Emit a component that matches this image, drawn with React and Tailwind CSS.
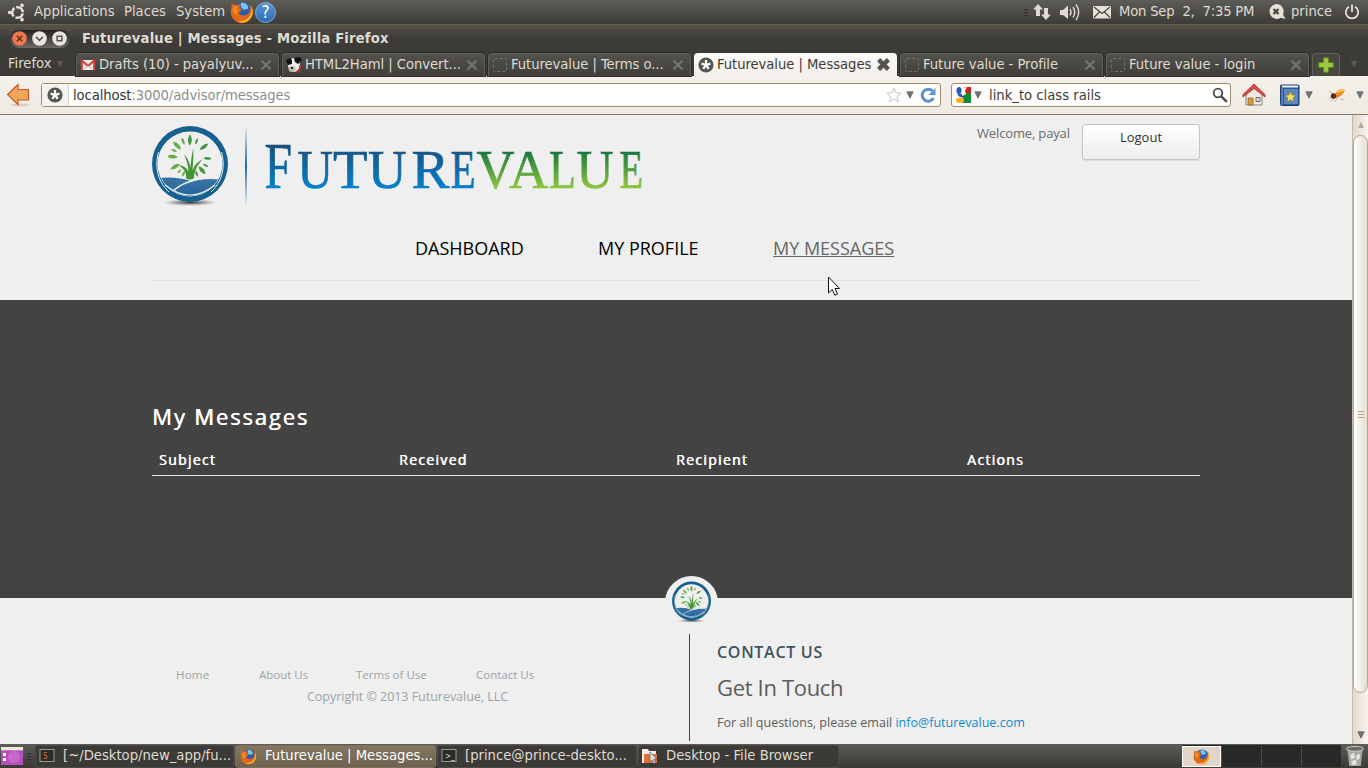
import React from "react";

const UI = "font-['DejaVu_Sans_Condensed','DejaVu_Sans',sans-serif] [font-stretch:condensed]";

function Foxy({ className }) {
  return (
    <svg viewBox="0 0 24 24" className={className}>
      <circle cx="12.5" cy="11" r="9" fill="#2a5fae" />
      <path d="M11 3c5-1 8 3 7 6-2-1-3 2-5 0-2-1-3-3-2-6z" fill="#7cc4ee" />
      <path d="M2 3c1 2 3 2 5 2 2-1 3 0 4 0-2 2-1 4 1 4 0 2-3 2-3 4 1 3 6 3 9 1 3-3 3-7 1-10 4 3 5 8 3 12-2 5-6 7-10 7-7 0-12-6-11-12 0-3 1-6 1-8z" fill="#e0661a" />
      <path d="M21 6c3 5 2 10-1 13-3 4-9 5-13 2 5 1 10-1 12-4 2-3 3-7 2-11z" fill="#f9b52a" />
      <path d="M3 7c2-2 4-1 5 0-2 2-1 3 1 4-2 1-3 3-2 5-3-2-5-5-4-9z" fill="#f08a24" />
    </svg>
  );
}

const leaves = [
  [0, 1], [22, 0.6], [53, 0.95], [93, 0.75], [117, 0.55], [137, 0.95], [158, 0.6],
  [-23, 0.7], [-47, 1], [-66, 0.6], [-87, 0.95], [-121, 1], [-142, 0.5], [-158, 0.6],
];

function Emblem({ className }) {
  return (
    <svg viewBox="0 0 80 84" className={className}>
      <defs>
        <radialGradient id="shade">
          <stop offset="0" stopColor="#222" stopOpacity=".9" />
          <stop offset="1" stopColor="#555" stopOpacity="0" />
        </radialGradient>
        <linearGradient id="hill" x2="0" y2="1">
          <stop offset="0" stopColor="#3c77a8" />
          <stop offset="1" stopColor="#1f5f96" />
        </linearGradient>
        <clipPath id="disc"><circle cx="40" cy="41" r="32" /></clipPath>
      </defs>
      <ellipse cx="40" cy="79.500" rx="27" ry="3.400" fill="url(#shade)" />
      <circle cx="40" cy="41" r="38" fill="#15608f" />
      <circle cx="40" cy="41" r="32.500" fill="#efefef" />
      <path d="M8.500 29C4 46 9 60 19 69M71.500 29C76 46 71 60 61 69" fill="none" stroke="#e8f0f4" strokeWidth="1" />
      <g clipPath="url(#disc)">
        <path d="M2 56Q23 52 41 58L23 70Q10 70 2 56z" fill="#35709f" />
        <path d="M23 69Q43 52 78 56Q68 76 42 76Q29 76 23 71z" fill="url(#hill)" />
        <path d="M21 70Q39 52 72 56" fill="none" stroke="#efefef" strokeWidth="1.300" />
      </g>
      <path d="M15 62Q40 82 65 62" fill="none" stroke="#e8f1f5" strokeWidth="1.200" />
      {leaves.map(([a, s]) => (
        <path key={a} d="M0-5.500C-2.800-2-2.500 2-.4 5.500C2.500 2 2.500-2 0-5.500z" fill={a < 0 ? "#62ad43" : "#429840"} transform={`rotate(${a} 40 34.500) translate(40 17) scale(${s})`} />
      ))}
      <path d="M36 55C37 48 33 46 29 42C34 43 37 45 38.500 49C38.500 42 36 36 34 31C38 36 40 40 40.500 45C41 37 42 31 43.300 25C43.500 34 43 41 42.500 48C44 43 47 39 53 36C47 42 44 48 44 55Q40 58 36 55z" fill="#429533" />
    </svg>
  );
}

function Star({ className }) {
  return (
    <svg viewBox="0 0 16 16" className={className}>
      <circle cx="8" cy="8" r="7.600" fill="#555753" />
      <path d="M8 3V8M3.600 6.600L8 8L12.400 6.600M5.300 11.800L8 8L10.700 11.800" stroke="#fff" strokeWidth="2.200" fill="none" />
    </svg>
  );
}

const Down = ({ className }) => (
  <svg viewBox="0 0 8 8" className={`h-2 w-2 shrink-0 ${className}`}><path d="M.8.8H7.200L4 7.200z" fill="currentColor" stroke="#4a4844" strokeWidth=".6" /></svg>
);

function Fav({ kind }) {
  if (kind === "gmail")
    return <svg viewBox="0 0 16 16" className="h-4 w-4"><path d="M1 3H15V13H1z" fill="#f2eee8" /><path d="M1.800 13V3.500L8 9L14.200 3.500V13" fill="none" stroke="#d33c30" strokeWidth="2" /><path d="M3.500 12L8 9L12.500 12" fill="none" stroke="#c9c4bb" /></svg>;
  if (kind === "cow")
    return <svg viewBox="0 0 16 16" className="h-4 w-4"><ellipse cx="8" cy="8" rx="6" ry="7" fill="#eee" /><path d="M0 3L4 1L6 3L6 7L2 8zM8 1L14 0L16 3L12 7L9 5z" fill="#111" /><ellipse cx="6" cy="12" rx="3.500" ry="3" fill="#bbb" /><path d="M5 10H7V12H5z" fill="#222" /><path d="M14 8Q15 13 10 15" stroke="#c33" strokeWidth="1.800" fill="none" /></svg>;
  if (kind === "star") return <Star className="h-4 w-4" />;
  return <span className="ml-px h-[14px] w-[14px] rounded-[2px] border border-dashed border-[#73716b]" />;
}

const tabs = [
  ["gmail", "Drafts (10) - payalyuv..."],
  ["cow", "HTML2Haml | Convert..."],
  ["blank", "Futurevalue | Terms o..."],
  ["star", "Futurevalue | Messages"],
  ["blank", "Future value - Profile"],
  ["blank", "Future value - login"],
];

function Tab({ kind, label }) {
  const on = kind === "star";
  return (
    <div className={`flex h-[23px] w-[203px] shrink-0 items-center rounded-t-[4px] ${on ? "bg-linear-to-b from-[#fbfaf8] to-[#f3efe9] pl-1 text-[#3c3b37]" : "border border-b-0 border-[#62605a] bg-linear-to-b from-[#53514c] to-[#403f3a] pl-[3px] text-[#dfdbd2] shadow-[0_0_0_1px_#2c2b28]"}`}>
      <span className="flex w-[19px] shrink-0">
        <Fav kind={kind} />
      </span>
      <span className={`${on ? "w-[160px]" : "w-[161px]"} pb-0.5 text-[14.67px] leading-[20px] tracking-[-0.05px] whitespace-nowrap`}>{label}</span>
      <svg viewBox="0 0 12 12" className={on ? "h-[13px] w-[13px]" : "h-[12px] w-[12px]"}>
        <path d="M1.500 1.500L10.500 10.500M10.500 1.500L1.500 10.500" stroke={on ? "#55534f" : "#75736d"} strokeWidth={on ? 4 : 2.400} />
      </svg>
    </div>
  );
}

function Panel() {
  return (
    <div className="flex h-[25px] items-center border-b border-[#6b6047] bg-linear-to-b from-[#5d5c57] to-[#3d3c38] pl-[7px] text-[14.67px] leading-none whitespace-nowrap text-[#dfdbd2]">
      <svg viewBox="0 0 20 20" className="h-[19px] w-[19px] shrink-0">
        <circle cx="11" cy="10" r="5.600" fill="none" stroke="#e8e4da" strokeWidth="2.600" strokeDasharray="9.700 2" strokeDashoffset="-1" />
        <g fill="#e8e4da"><circle cx="2.800" cy="10" r="1.900" /><circle cx="15.800" cy="2.500" r="1.900" /><circle cx="15.800" cy="17.500" r="1.900" /></g>
      </svg>
      <span className="ml-2 w-[90px] pb-0.5">Applications</span>
      <span className="w-[52px] pb-0.5">Places</span>
      <span className="w-[54px] pb-0.5">System</span>
      <Foxy className="h-6 w-6 shrink-0" />
      <span className="ml-[1px] flex h-[21px] w-[21px] items-center justify-center rounded-full border border-[#7eaee0] bg-linear-to-b from-[#5b94d0] to-[#306cb4] text-[17px] text-white">?</span>
      <svg viewBox="0 0 90 24" className="ml-auto h-6 w-[90px]">
        <path d="M1 9.500H5M1 12.500H5M1 15.500H5" stroke="#2f2e2b" />
        <path d="M15 4L20 9.500H17V16H13V9.500H10zM23 20L18 14.500H21V8H25V14.500H28z" fill="#dfdbd2" />
        <path d="M37 10H40L45 5.500V19L40 15H37z" fill="#dfdbd2" />
        <path d="M47 9Q49 12.300 47 15.500M50 7Q53.500 12.300 50 17.500M53 4.500Q58.500 12.300 53 20" stroke="#dfdbd2" strokeWidth="1.400" fill="none" />
        <rect x="70" y="6" width="18" height="12.500" rx="1" fill="#e6e2d8" />
        <path d="M71 7L79 13.500L87 7M71 17.500L76.500 12M87 17.500L81.500 12" stroke="#45443f" strokeWidth="1.200" fill="none" />
      </svg>
      <span className="ml-[6px] w-[149px] pb-0.5 tracking-[-0.2px] whitespace-pre">Mon Sep  2,  7:35 PM</span>
      <svg viewBox="0 0 18 18" className="h-[18px] w-[18px] shrink-0">
        <path d="M8 1A7.500 7.500 0 1 0 13 14.800L17.500 16L15 11.500A7.500 7.500 0 0 0 8 1z" fill="#e6e2d8" />
        <path d="M5.500 6L10.500 11M10.500 6L5.500 11" stroke="#45443f" strokeWidth="2.200" />
      </svg>
      <span className="ml-[5px] w-[53px] pb-0.5">prince</span>
      <svg viewBox="0 0 16 16" className="mr-2 h-4 w-4 shrink-0">
        <path d="M5 2.800A6.200 6.200 0 1 0 11 2.800M8 .5V8" fill="none" stroke="#e6e2d8" strokeWidth="1.800" />
      </svg>
    </div>
  );
}

function TitleBar() {
  return (
    <div className="flex h-[27px] items-center bg-linear-to-b from-[#55534e] to-[#3c3b37] to-50% pl-[10px]">
      <div className="flex h-[18px] w-[60px] items-center gap-1 rounded-full bg-linear-to-b from-[#252422] to-[#6a6964] pl-[2px]">
        <svg viewBox="0 0 14 14" className="h-[15px] w-[15px]"><circle cx="7" cy="7" r="6.800" fill="#ee7950" /><path d="M4.500 4.500L9.500 9.500M9.500 4.500L4.500 9.500" stroke="#5b2c1c" strokeWidth="1.400" /></svg>
        <svg viewBox="0 0 14 14" className="ml-px h-[15px] w-[15px]"><circle cx="7" cy="7" r="6.800" fill="#e9e6e1" /><path d="M3.800 5.500L7 8.700L10.200 5.500" stroke="#55534e" strokeWidth="1.400" fill="none" /></svg>
        <svg viewBox="0 0 14 14" className="ml-px h-[15px] w-[15px]"><circle cx="7" cy="7" r="6.800" fill="#e9e6e1" /><path d="M4.800 4.800H9.200V9.200H4.800z" stroke="#55534e" strokeWidth="1.400" fill="none" /></svg>
      </div>
      <span className="ml-3 text-[14.67px] leading-none font-bold tracking-[0.17px] text-[#dfdbd2]">Futurevalue | Messages - Mozilla Firefox</span>
    </div>
  );
}

function Toolbar() {
  return (
    <div className="flex h-[39px] items-center border-b border-[#8c7c5e] bg-linear-to-b from-[#f4f0ea] to-[#efebe4] pl-[6px] text-[14.67px] text-[#3c3b37]">
      <svg viewBox="0 0 24 24" className="h-6 w-6"><ellipse cx="14" cy="22" rx="9" ry="1.500" fill="#d5cec4" /><path d="M1.500 11.500L12 1.500V6.500H22.500V17H12V21.500z" fill="#f3a55c" stroke="#cc5a24" strokeWidth="1.200" /></svg>
      <div className="ml-[11px] flex h-6 w-[900px] shrink-0 items-center rounded-[3px] border border-[#9c8c6c] bg-white">
        <span className="flex h-full w-[27px] items-center justify-center border-r border-[#d8d4cc] bg-[#f4f2ef]"><Star className="h-4 w-4" /></span>
        <span className="ml-1 leading-none tracking-[-0.1px] text-[#8f8d88]"><span className="text-[#333]">localhost</span>:3000/advisor/messages</span>
        <svg viewBox="0 0 16 16" className="ml-auto h-4 w-4"><path d="M8 1L10 5.800L15.200 6.200L11.200 9.600L12.500 14.800L8 12L3.500 14.800L4.800 9.600L.8 6.200L6 5.800z" fill="#fff" stroke="#c6c4c0" /></svg>
        <Down className="mr-[5px] ml-1 text-[#777]" />
        <svg viewBox="0 0 16 16" className="mr-1 ml-px h-4 w-4"><path d="M13.500 11A6 6 0 1 1 12.500 4" fill="none" stroke="#5c93cf" strokeWidth="3" /><path d="M15.500 1V8H8.500z" fill="#5c93cf" /></svg>
      </div>
      <div className="ml-[10px] flex h-6 w-[280px] shrink-0 items-center rounded-[3px] border border-[#9c8c6c] bg-white pl-[3px]">
        <svg viewBox="0 0 16 16" className="h-4 w-4"><path d="M0 0H16V16H0z" fill="#fff" /><path d="M9 0H16V6H9z" fill="#e01b1b" /><path d="M8 6H16V16H8z" fill="#138a36" /><ellipse cx="4" cy="3.500" rx="2.500" ry="3.500" fill="#2457c0" /><path d="M2 7L8 7L9 11L4 9.500z" fill="#2457c0" /><ellipse cx="5" cy="13.300" rx="4" ry="2.700" fill="#f5b21a" /><path d="M7 1L12 0L10 4L11 7L7 9z" fill="#fff" /></svg>
        <Down className="ml-[3px] text-[#777]" />
        <span className="ml-[7px] leading-none">link_to class rails</span>
        <svg viewBox="0 0 16 16" className="mr-[2px] ml-auto h-4 w-4"><circle cx="6" cy="6" r="4.300" fill="none" stroke="#4a4945" strokeWidth="1.800" /><path d="M9.300 9.300L14.800 14.800" stroke="#4a4945" strokeWidth="2.400" /></svg>
      </div>
      <svg viewBox="0 0 24 24" className="ml-[11px] h-6 w-6 shrink-0"><path d="M4 11L12 4L20 11V22H4z" fill="#eee9e2" stroke="#8a8782" /><path d="M6 15H11V22H6z" fill="#d79a3a" stroke="#8b5d1c" strokeWidth=".7" /><path d="M14 14.500H18V18.500H14z" fill="#cfe0f0" stroke="#6a6965" /><path d="M12 1L23 11.500V14L12 5.500L1 14V11.500z" fill="#d94b46" stroke="#a82a28" strokeWidth=".8" /></svg>
      <svg viewBox="0 0 22 24" className="ml-[13px] h-6 w-[22px] shrink-0"><rect x="1.500" y="2" width="18.500" height="20.500" rx="1" fill="#2b589a" stroke="#1c3c72" /><path d="M3 2.500H19V4.500H3z" fill="#eee" /><path d="M3 5V22" stroke="#7fa3d8" /><rect x="5" y="6" width="14" height="15" fill="#5e87bd" /><path d="M11.500 8L13 12L17 12.300L14 14.800L15 19L11.500 16.700L8 19L9 14.800L6 12.300L10 12z" fill="#f8e35a" stroke="#7c7324" strokeWidth=".6" /></svg>
      <Down className="ml-[4px] text-[#777]" />
      <svg viewBox="0 0 18 16" className="ml-[15px] h-4 w-[18px] shrink-0"><path d="M1 12L5 9M3 14L8 10M7 15L10 10M1 4L6 7M12 12L16 13" stroke="#a9a49c" strokeWidth=".8" /><path d="M7 8Q8 3 14 2L17 3Q15 9 8 11z" fill="#ec8a1e" /><path d="M9 5L16 3" stroke="#f8d060" strokeWidth="1.500" /><circle cx="5.500" cy="9" r="2.700" fill="#5a2c10" /></svg>
      <Down className="ml-[10px] text-[#777]" />
    </div>
  );
}

const blueGlyphs = [
  ["F", 112.5, 27.5, 65], ["U", 145.5, 35.500, 54.5], ["T", 181, 34.500, 54.5], ["U", 216, 38.500, 54.5], ["R", 259.500, 38, 54.5], ["E", 298.500, 25, 54.5],
];
const greenGlyphs = [["V", 324.500, 38, 54.5], ["A", 357, 39.500, 54.5], ["L", 397, 27, 54.5], ["U", 424.500, 37, 54.5], ["E", 467.500, 23.500, 54.5]];

const Word = ({ glyphs, fill }) => (
  <text y="64.500" fill={fill} stroke={fill} strokeWidth=".7">
    {glyphs.map(([c, x, w, size]) => (
      <tspan key={x} x={x} textLength={w} lengthAdjust="spacingAndGlyphs" fontSize={size}>{c}</tspan>
    ))}
  </text>
);

function Logo() {
  return (
    <svg viewBox="0 0 540 90" className="h-[90px] w-[540px]">
      <defs>
        <linearGradient id="blue" gradientUnits="userSpaceOnUse" x1="0" y1="22" x2="0" y2="65"><stop offset="0" stopColor="#1a4f7c" /><stop offset="1" stopColor="#0580cd" /></linearGradient>
        <linearGradient id="green" gradientUnits="userSpaceOnUse" x1="0" y1="27" x2="0" y2="65"><stop offset="0" stopColor="#14743f" /><stop offset="1" stopColor="#8ec63f" /></linearGradient>
        <linearGradient id="rule" x2="0" y2="1"><stop offset="0" stopColor="#1a6ba5" stopOpacity="0" /><stop offset=".5" stopColor="#1a6ba5" /><stop offset="1" stopColor="#1a6ba5" stopOpacity="0" /></linearGradient>
      </defs>
      <rect x="93" y="2" width="2" height="81" fill="url(#rule)" />
      <g className="font-['Liberation_Serif',serif] [font-stretch:normal]">
        <Word glyphs={blueGlyphs} fill="url(#blue)" />
        <Word glyphs={greenGlyphs} fill="url(#green)" />
      </g>
    </svg>
  );
}

function Page() {
  const faux = "[text-shadow:0.6px_0_0_currentColor]";
  return (
    <div className="flex h-[629px] w-[1352px] flex-col overflow-hidden bg-[#efefef] font-['Open_Sans','Noto_Sans',sans-serif] [font-stretch:normal]">
      <header className="h-[185px] px-[152px]">
        <div className="flex h-[104px] items-start pt-[8px]">
          <Emblem className="-ml-[2px] h-[84px] w-[80px] shrink-0" />
          <div className="-ml-[78px] shrink-0"><Logo /></div>
          <span className="ml-auto w-[105px] text-[13px] leading-[20px] tracking-[-0.15px] whitespace-nowrap text-[#6a6a6a]">Welcome, payal</span>
          <button className="mt-px h-[36px] w-[118px] rounded-[3px] border border-[#c4c4c4] bg-linear-to-b from-white to-[#ededed] pb-[9px] text-[13px] leading-none text-[#333] shadow-[0_1px_1px_#ddd]">Logout</button>
        </div>
        <nav className="flex h-[62px] border-b border-[#e4e4e4] pt-[15px] pl-[263px] text-[18px] leading-[28px] whitespace-nowrap text-black">
          <a className="w-[183px]">DASHBOARD</a>
          <a className="w-[175px]">MY PROFILE</a>
          <a className="text-[#666] underline">MY MESSAGES</a>
        </nav>
      </header>
      <main className="h-[298px] bg-[#434343] px-[152px] pt-[99px] text-white">
        <h1 className={`text-[22px] leading-[34px] tracking-[1.850px] ${faux}`}>My Messages</h1>
        <div className={`mt-[10px] grid h-[33px] grid-cols-[240px_277px_291px_1fr] border-b border-[#e4e4e4] pl-[7px] text-[14px] leading-[34px] tracking-[1.300px] ${faux}`}>
          <span>Subject</span><span>Received</span><span>Recipient</span><span>Actions</span>
        </div>
      </main>
      <footer className="relative flex h-[146px] text-[13px] text-[#5c5c5c]">
        <div className="absolute -top-[22px] left-[665px] flex h-[53px] w-[53px] justify-center rounded-full bg-[#efefef] pt-[4px]"><Emblem className="h-[43px] w-[41px]" /></div>
        <div className="w-[689px] pt-[66px] pl-[176px] text-[#9ba4a9]">
          <div className="flex text-[11.500px] leading-[22px]"><a className="w-[83px] tracking-[0.2px]">Home</a><a className="w-[97px]">About Us</a><a className="w-[120px]">Terms of Use</a><a>Contact Us</a></div>
          <p className="pl-[131px] text-[12.500px] leading-[21px] tracking-[-0.030px]">Copyright © 2013 Futurevalue, LLC</p>
        </div>
        <div className="mt-9 h-[107px] border-l border-[#444] pt-[5px] pl-[27px]">
          <h2 className="text-[16px] leading-[26px] font-semibold tracking-[0.700px] text-[#3d5360]">CONTACT US</h2>
          <h3 className="mt-[5px] text-[22px] leading-[34px] tracking-[-0.330px] text-[#5c5c5c]">Get In Touch</h3>
          <p className="mt-[9px] text-[12.500px] leading-[20px] whitespace-nowrap">For all questions, please email <a className="text-[#0e8bd0]">info@futurevalue.com</a></p>
        </div>
      </footer>
    </div>
  );
}

function Scrollbar() {
  return (
    <div className="flex h-[629px] w-4 flex-col items-center border-l border-[#c5baa4] bg-linear-to-r from-[#e2d9cc] to-[#f7f4ef]">
      <svg viewBox="0 0 8 8" className="my-[6px] h-2 w-2"><path d="M4 1L7 7H1z" fill="#b3aa99" /></svg>
      <div className="flex h-[558px] w-[15px] flex-col items-center justify-center gap-[2px] rounded-full border border-[#b5a78a] bg-linear-to-r from-white to-[#e4ddd2]">
        <i className="h-px w-[6px] bg-[#b5a78a]" /><i className="h-px w-[6px] bg-[#b5a78a]" /><i className="h-px w-[6px] bg-[#b5a78a]" />
      </div>
      <Down className="mt-auto mb-[5px] text-[#777]" />
    </div>
  );
}

function Task({ on, icon, label }) {
  return (
    <div className={`flex h-[23px] items-center rounded-[3px] border ${on ? "border-[#7d6f5e] bg-linear-to-b from-[#85765f] to-[#6f6250] pl-1 text-white" : "border-[#4a4944] bg-[#3b3a36] pl-[3px] text-[#dfdbd2]"}`}>
      {icon}
      <span className="ml-2 pb-0.5 whitespace-nowrap">{label}</span>
    </div>
  );
}

function Taskbar() {
  const term = (t, c) => (
    <svg viewBox="0 0 16 16" className="h-4 w-4"><rect x="1" y="1.500" width="14" height="12" fill="#2b2b29" stroke="#99978f" /><text x="4" y="10.500" fontSize="8" fill={c}>{t}</text></svg>
  );
  return (
    <div className="flex h-[24px] items-center bg-linear-to-b from-[#5d5c57] to-[#3a3935] text-[14.67px] leading-none">
      <svg viewBox="0 0 35 24" className="h-6 w-[35px]"><rect x="1" y="3" width="22" height="18" fill="#c45bc4" /><rect x="1" y="3" width="22" height="3.500" fill="#ece8d8" /><rect x="1" y="6.500" width="22" height="14.500" fill="#b64fbb" /><circle cx="14" cy="13" r="6" fill="#d07ad4" opacity=".6" /><path d="M3 9H6V12H3zM3 14H6V17H3z" fill="#fff" /><path d="M27 9.500H31M27 12.500H31M27 15.500H31" stroke="#2f2e2b" /></svg>
      <div className="grid grid-cols-[199px_201px_200px_201px] gap-px">
        <Task icon={term("S", "#d5741f")} label="[~/Desktop/new_app/fu..." />
        <Task on icon={<Foxy className="h-[17px] w-[17px]" />} label="Futurevalue | Messages..." />
        <Task icon={term(">_", "#ddd")} label="[prince@prince-deskto..." />
        <Task icon={<svg viewBox="0 0 16 16" className="h-4 w-4"><path d="M0 1H6L7 3H14V15H0z" fill="#f2ece4" /><path d="M2 6H15V15H2z" fill="#e7703a" /><path d="M8 4L15 11H12L13.500 15L11.500 15.500L10.500 12L8 14z" fill="#ddd" stroke="#555" strokeWidth=".6" /></svg>} label="Desktop - File Browser" />
      </div>
      <div className="ml-auto flex h-[22px] items-center bg-[#292927]">
        <div className="flex h-[21px] w-[39px] items-center justify-center border border-white bg-[#e0d5c8]"><Foxy className="h-[17px] w-[17px]" /></div>
        <div className="h-5 w-10 border-l border-[#4c4b48]" /><div className="h-5 w-10 border-l border-[#4c4b48]" /><div className="h-5 w-10 border-l border-[#4c4b48]" />
      </div>
      <svg viewBox="0 0 20 24" className="mr-[3px] ml-[4px] h-[23px] w-5"><path d="M2 4H18L16 22H4z" fill="#a7a8a5" /><ellipse cx="10" cy="4" rx="9" ry="2.500" fill="#686a66" stroke="#cfd0cd" /><path d="M5 10L9 8L10 13L6 15zM11 11L15 9L15 14L12 16zM6 17L11 15L12 20L7 21z" fill="#e4e5e2" /></svg>
    </div>
  );
}

export default function App() {
  return (
    <div className={`relative h-[768px] w-[1368px] overflow-hidden bg-[#3c3b37] ${UI}`}>
      <Panel />
      <TitleBar />
      <div className="flex h-[24px] items-end gap-[3px] bg-[#3c3b37] text-[14.67px] text-[#dfdbd2]">
        <div className="flex h-[23px] w-[73px] items-center pb-0.5 pl-2 leading-none">Firefox<Down className="ml-[5px] text-[#5c5a55]" /></div>
        {tabs.map(([k, l]) => <Tab key={l} kind={k} label={l} />)}
        <div className="flex h-[23px] w-[28px] items-center justify-center rounded-t-[4px] border border-b-0 border-[#62605a] bg-[#484742]">
          <svg viewBox="0 0 16 16" className="h-4 w-4"><path d="M5.500 .8H10.500V5.500H15.200V10.500H10.500V15.200H5.500V10.500H.8V5.500H5.500z" fill="#9bc83c" stroke="#5f8a1b" /></svg>
        </div>
        <Down className="mb-[8px] ml-[7px] text-[#5c5a55]" />
      </div>
      <Toolbar />
      <div className="flex"><Page /><Scrollbar /></div>
      <Taskbar />
      <svg viewBox="0 0 12 20" className="absolute top-[276px] left-[827px] h-5 w-[13px]"><path d="M1 1V17L4.800 13.500L7.300 19.200L10 18L7.500 12.500H12z" fill="#fff" stroke="#111" /></svg>
    </div>
  );
}
